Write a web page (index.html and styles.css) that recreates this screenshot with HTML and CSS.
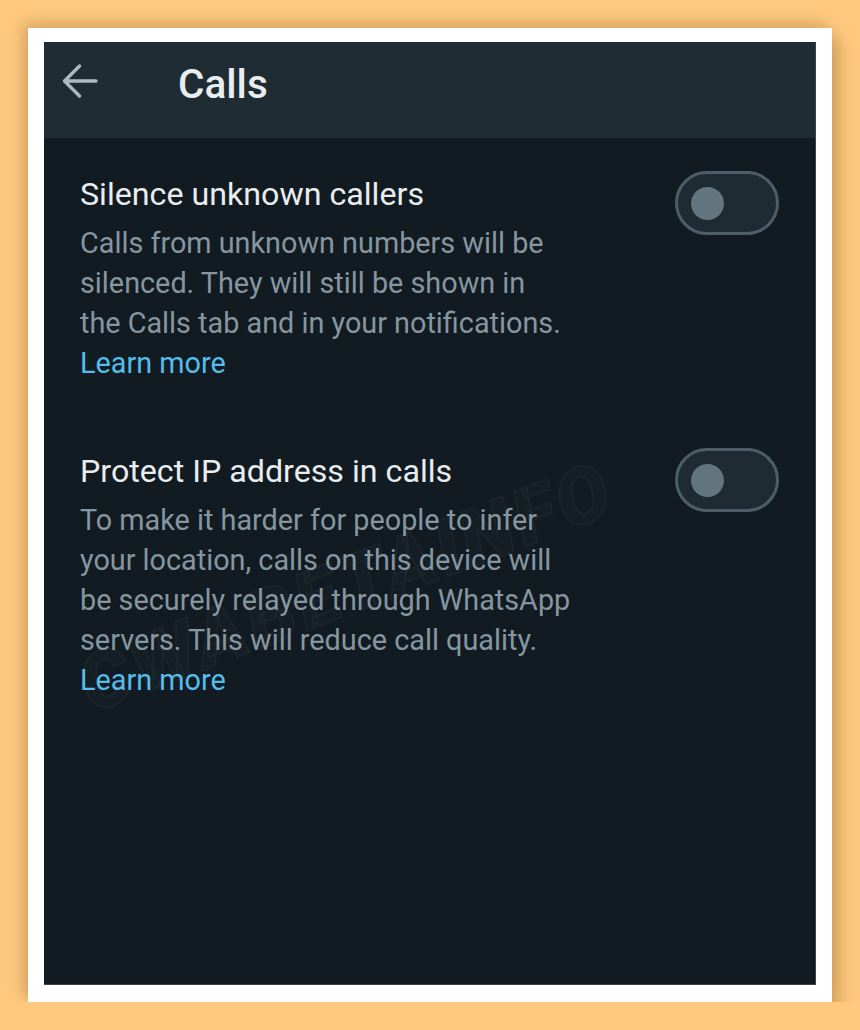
FILE: index.html
```html
<!DOCTYPE html>
<html lang="en">
<head>
  <meta charset="UTF-8" />
  <meta name="viewport" content="width=device-width, initial-scale=1.0" />
  <title>Calls</title>
  <link rel="stylesheet" href="styles.css">
</head>
<body>
  <div class="frame">
    <div class="screen">
      <div class="topbar">
        <svg class="back" width="36" height="36" viewBox="0 0 36 36">
          <path d="M34 18 H2.5 M17.5 3 L2.5 18 L17.5 33" fill="none" stroke="#aebac1" stroke-width="3.4" stroke-linecap="round" stroke-linejoin="round" />
        </svg>
        <h1>Calls</h1>
      </div>

      <div class="settings">
        <div class="setting">
          <div class="setting-text">
            <div class="setting-title">Silence unknown callers</div>
            <div class="setting-desc">
              Calls from unknown numbers will be<br>
              silenced. They will still be shown in<br>
              the Calls tab and in your notifications.<br>
              <a class="learn" href="#">Learn more</a>
            </div>
          </div>
          <div class="toggle"><span class="knob"></span></div>
        </div>

        <div class="setting">
          <div class="setting-text">
            <div class="setting-title">Protect IP address in calls</div>
            <div class="setting-desc">
              To make it harder for people to infer<br>
              your location, calls on this device will<br>
              be securely relayed through WhatsApp<br>
              servers. This will reduce call quality.<br>
              <a class="learn" href="#">Learn more</a>
            </div>
          </div>
          <div class="toggle"><span class="knob"></span></div>
        </div>

        <div class="watermark">CWABETAINFO</div>
      </div>
    </div>
  </div>
</body>
</html>
```

FILE: styles.css
```css
body {
  margin: 0;
  background: #fec97f;
  font-family: Roboto, "Noto Sans", sans-serif;
}

.frame {
  margin: 28px 0 0 28px;
  width: 772px;
  height: 943px;
  padding: 14px 16px 17px 16px;
  background: #fff;
  box-shadow: -6px -6px 14px rgba(120, 80, 20, 0.25), 8px 10px 16px rgba(120, 80, 20, 0.3);
}

.screen {
  height: 100%;
  background: #121b22;
  display: flex;
  flex-direction: column;
  border-right: 1px solid #3a444b;
  border-bottom: 1px solid #3a444b;
  box-sizing: border-box;
}

.topbar {
  height: 96px;
  background: #202c33;
  display: flex;
  align-items: flex-start;
  padding-left: 18px;
  flex-shrink: 0;
}

.back {
  margin-top: 21px;
}

.topbar h1 {
  margin: 18px 0 0 80px;
  font-size: 40.5px;
  line-height: 48px;
  font-weight: 500;
  color: #e9edef;
}

.settings {
  position: relative;
  flex: 1;
  padding: 36px 36px 0 36px;
  overflow: hidden;
}

.setting {
  display: flex;
  justify-content: space-between;
  align-items: flex-start;
  margin-bottom: 68px;
}

.setting-title {
  font-size: 32.2px;
  line-height: 40px;
  color: #e9edef;
  margin-bottom: 9px;
}

.setting-desc {
  font-size: 28.8px;
  line-height: 40px;
  color: #8696a0;
}

.learn {
  color: #53bdeb;
  text-decoration: none;
}

.toggle {
  width: 104px;
  height: 64px;
  box-sizing: border-box;
  border: 3px solid #4d5e68;
  border-radius: 32px;
  background: #1f2b32;
  display: flex;
  align-items: center;
  padding-left: 13px;
  margin-top: -3px;
  flex-shrink: 0;
}

.knob {
  width: 33px;
  height: 33px;
  border-radius: 50%;
  background: #637680;
}

.watermark {
  position: absolute;
  left: 22px;
  top: 508px;
  font-size: 78px;
  font-weight: 900;
  font-style: italic;
  letter-spacing: 4px;
  color: rgba(255, 255, 255, 0.015);
  -webkit-text-stroke: 2px rgba(255, 255, 255, 0.035);
  transform: rotate(-21deg);
  transform-origin: left top;
  pointer-events: none;
}
```
